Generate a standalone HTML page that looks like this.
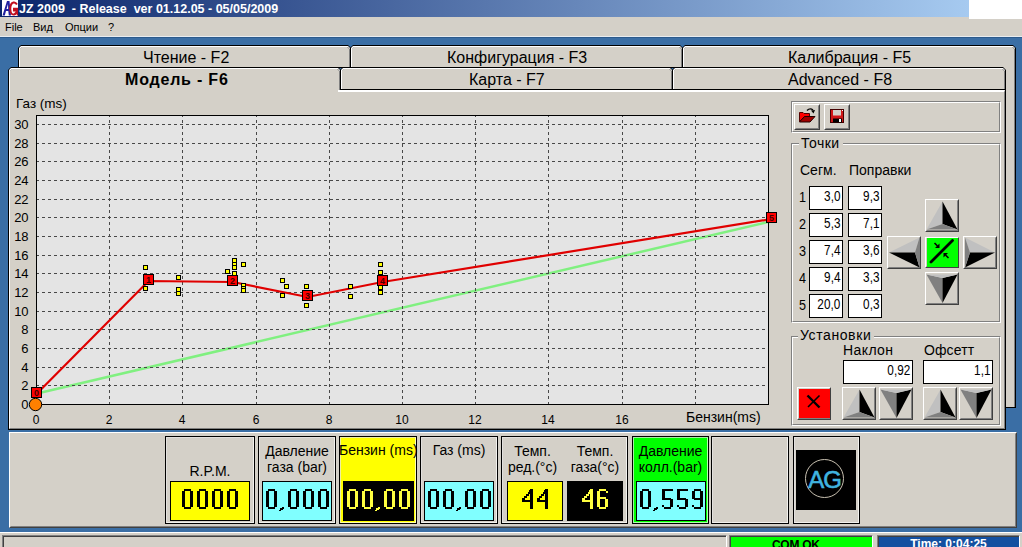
<!DOCTYPE html>
<html><head><meta charset="utf-8">
<style>
*{margin:0;padding:0;box-sizing:border-box}
html,body{width:1022px;height:547px;overflow:hidden;background:#3A6EA5;font-family:"Liberation Sans",sans-serif;color:#000;position:relative}
.a{position:absolute}
.t{position:absolute;white-space:pre;line-height:1}
.gray{background:#D4D0C8}
.btn{position:absolute;background:#D4D0C8;border:1px solid;border-color:#fff #404040 #404040 #fff}
.btn:before{content:"";position:absolute;left:0;top:0;right:0;bottom:0;border:1px solid;border-color:#D4D0C8 #808080 #808080 #D4D0C8}
.etch{position:absolute;border:1px solid;border-color:#808080 #fff #fff #808080}
.etch:before{content:"";position:absolute;left:0;top:0;right:0;bottom:0;border:1px solid;border-color:#fff #808080 #808080 #fff}
.edit{position:absolute;background:#fff;border:1px solid #000;font-size:14px;text-align:right;padding-right:2px;line-height:19px}
.edit span{display:inline-block;transform:scaleX(.84);transform-origin:100% 50%}
.lbl{position:absolute;white-space:pre;line-height:1;font-size:13px}
.disp{position:absolute;border:1px solid #000;font-weight:bold;font-size:25px;text-align:center;line-height:35px}
</style></head><body>

<div class="a" style="left:0;top:0;width:969px;height:17px;background:linear-gradient(to right,#0A246A,#A6CAF0)"></div>
<div class="a" style="left:969px;top:0;width:53px;height:19px;background:#fff"></div>
<div class="a gray" style="left:0;top:17px;width:969px;height:20px"></div>
<div class="a gray" style="left:969px;top:19px;width:53px;height:18px"></div>
<div class="a" style="left:0;top:36px;width:1022px;height:1px;background:#E8ECF0"></div>
<div class="a" style="left:0;top:37px;width:1022px;height:1px;background:#2C5A8C"></div>
<svg class="a" style="left:2px;top:0" width="16" height="16">
<rect width="16" height="16" fill="#fff"/>
<path d="M0.5 15.5 L5 1 H7.5 L9 15.5 H6.8 L6.3 11 H4 L2.8 15.5Z M4.5 9 H6.2 L6 4 Z" fill="#2020A0" fill-rule="evenodd"/>
<path d="M15 4.5 Q13.5 2 11.5 2.5 Q8 3.5 8.3 9.5 Q8.7 15 12 14.5 Q14.5 14 15 10.5 H12 V8.8 H15.8 V15.5" fill="none" stroke="#C01020" stroke-width="2"/>
</svg>
<div class="t" style="left:19px;top:3px;font-weight:bold;font-size:12.5px;color:#fff">JZ 2009  - Release  ver 01.12.05 - 05/05/2009</div>
<div class="t" style="left:5px;top:22px;font-size:11px">File</div>
<div class="t" style="left:33px;top:22px;font-size:11px">Вид</div>
<div class="t" style="left:65px;top:22px;font-size:11px">Опции</div>
<div class="t" style="left:108px;top:22px;font-size:11px">?</div>
<div class="a gray" style="left:1000px;top:60px;width:16px;height:348px;border-right:1px solid #000;border-bottom:1px solid #000"></div>
<div class="a" style="left:1014px;top:60px;width:1px;height:347px;background:#808080"></div>
<div class="a" style="left:18px;top:45px;width:333px;height:23px;background:#000;clip-path:polygon(0 3px,3px 0,calc(100% - 3px) 0,100% 3px,100% 100%,0 100%)"><div class="a" style="left:1px;top:1px;right:1px;bottom:1px;background:#fff;clip-path:polygon(0 2px,2px 0,calc(100% - 2px) 0,100% 2px,100% 100%,0 100%)"><div class="a" style="left:1px;top:1px;right:0;bottom:0;background:#808080;clip-path:polygon(0 2px,2px 0,calc(100% - 2px) 0,100% 2px,100% 100%,0 100%)"><div class="a" style="left:0;top:0;right:1px;bottom:0;background:#D4D0C8;clip-path:polygon(0 2px,2px 0,calc(100% - 2px) 0,100% 2px,100% 100%,0 100%)"></div></div></div></div>
<div class="a" style="left:350px;top:45px;width:333px;height:23px;background:#000;clip-path:polygon(0 3px,3px 0,calc(100% - 3px) 0,100% 3px,100% 100%,0 100%)"><div class="a" style="left:1px;top:1px;right:1px;bottom:1px;background:#fff;clip-path:polygon(0 2px,2px 0,calc(100% - 2px) 0,100% 2px,100% 100%,0 100%)"><div class="a" style="left:1px;top:1px;right:0;bottom:0;background:#808080;clip-path:polygon(0 2px,2px 0,calc(100% - 2px) 0,100% 2px,100% 100%,0 100%)"><div class="a" style="left:0;top:0;right:1px;bottom:0;background:#D4D0C8;clip-path:polygon(0 2px,2px 0,calc(100% - 2px) 0,100% 2px,100% 100%,0 100%)"></div></div></div></div>
<div class="a" style="left:682px;top:45px;width:334px;height:23px;background:#000;clip-path:polygon(0 3px,3px 0,calc(100% - 3px) 0,100% 3px,100% 100%,0 100%)"><div class="a" style="left:1px;top:1px;right:1px;bottom:0px;background:#fff;clip-path:polygon(0 2px,2px 0,calc(100% - 2px) 0,100% 2px,100% 100%,0 100%)"><div class="a" style="left:1px;top:1px;right:0;bottom:0;background:#808080;clip-path:polygon(0 2px,2px 0,calc(100% - 2px) 0,100% 2px,100% 100%,0 100%)"><div class="a" style="left:0;top:0;right:1px;bottom:0;background:#D4D0C8;clip-path:polygon(0 2px,2px 0,calc(100% - 2px) 0,100% 2px,100% 100%,0 100%)"></div></div></div></div>
<div class="t" style="left:143px;top:50px;font-size:16px">Чтение - F2</div>
<div class="t" style="left:447px;top:50px;font-size:16px">Конфигурация - F3</div>
<div class="t" style="left:788px;top:50px;font-size:16px">Калибрация - F5</div>
<div class="a gray" style="left:8px;top:89px;width:998px;height:341px;border:1px solid #000"><div class="a" style="left:0;top:0;right:0;bottom:0;border-left:1px solid #fff;border-top:2px solid #fff;border-right:1px solid #808080;border-bottom:1px solid #808080"></div></div>
<div class="a" style="left:340px;top:67px;width:333px;height:23px;background:#000;clip-path:polygon(0 3px,3px 0,calc(100% - 3px) 0,100% 3px,100% 100%,0 100%)"><div class="a" style="left:1px;top:1px;right:1px;bottom:1px;background:#fff;clip-path:polygon(0 2px,2px 0,calc(100% - 2px) 0,100% 2px,100% 100%,0 100%)"><div class="a" style="left:1px;top:1px;right:0;bottom:0;background:#808080;clip-path:polygon(0 2px,2px 0,calc(100% - 2px) 0,100% 2px,100% 100%,0 100%)"><div class="a" style="left:0;top:0;right:1px;bottom:0;background:#D4D0C8;clip-path:polygon(0 2px,2px 0,calc(100% - 2px) 0,100% 2px,100% 100%,0 100%)"></div></div></div></div>
<div class="a" style="left:672px;top:67px;width:334px;height:23px;background:#000;clip-path:polygon(0 3px,3px 0,calc(100% - 3px) 0,100% 3px,100% 100%,0 100%)"><div class="a" style="left:1px;top:1px;right:1px;bottom:1px;background:#fff;clip-path:polygon(0 2px,2px 0,calc(100% - 2px) 0,100% 2px,100% 100%,0 100%)"><div class="a" style="left:1px;top:1px;right:0;bottom:0;background:#808080;clip-path:polygon(0 2px,2px 0,calc(100% - 2px) 0,100% 2px,100% 100%,0 100%)"><div class="a" style="left:0;top:0;right:1px;bottom:0;background:#D4D0C8;clip-path:polygon(0 2px,2px 0,calc(100% - 2px) 0,100% 2px,100% 100%,0 100%)"></div></div></div></div>
<div class="a" style="left:8px;top:67px;width:333px;height:23px;background:#000;clip-path:polygon(0 3px,3px 0,calc(100% - 3px) 0,100% 3px,100% 100%,0 100%)"><div class="a" style="left:1px;top:1px;right:1px;bottom:0px;background:#fff;clip-path:polygon(0 2px,2px 0,calc(100% - 2px) 0,100% 2px,100% 100%,0 100%)"><div class="a" style="left:1px;top:1px;right:0;bottom:0;background:#808080;clip-path:polygon(0 2px,2px 0,calc(100% - 2px) 0,100% 2px,100% 100%,0 100%)"><div class="a" style="left:0;top:0;right:1px;bottom:0;background:#D4D0C8;clip-path:polygon(0 2px,2px 0,calc(100% - 2px) 0,100% 2px,100% 100%,0 100%)"></div></div></div></div>
<div class="a gray" style="left:10px;top:89px;width:328px;height:3px"></div>
<div class="a" style="left:9px;top:89px;width:1px;height:3px;background:#fff"></div>
<div class="t" style="left:125px;top:72px;font-size:16px;font-weight:bold;letter-spacing:0.8px">Модель - F6</div>
<div class="t" style="left:469px;top:72px;font-size:16px">Карта - F7</div>
<div class="t" style="left:788px;top:72px;font-size:16px">Advanced - F8</div>
<svg class="a" style="left:0;top:0" width="1022" height="430">
<rect x="36.5" y="115.5" width="732" height="289" fill="#E4E4E4" stroke="#000" stroke-width="1"/>
<line x1="36.0" y1="393.7337" x2="768.0" y2="222.00649999999996" stroke="#80F080" stroke-width="2.5"/>
<path d="M109.5 116V404 M182.5 116V404 M256.5 116V404 M329.5 116V404 M402.5 116V404 M475.5 116V404 M548.5 116V404 M622.5 116V404 M695.5 116V404" stroke="#484848" stroke-width="1" stroke-dasharray="3 3" stroke-dashoffset="2" fill="none"/>
<path d="M36 385.5H768 M36 367.5H768 M36 348.5H768 M36 329.5H768 M36 311.5H768 M36 292.5H768 M36 273.5H768 M36 255.5H768 M36 236.5H768 M36 217.5H768 M36 199.5H768 M36 180.5H768 M36 161.5H768 M36 143.5H768 M36 124.5H768" stroke="#484848" stroke-width="1" stroke-dasharray="3 3" fill="none"/>
<rect x="36.5" y="115.5" width="732" height="289" fill="none" stroke="#000" stroke-width="1"/>
<polyline points="36.5,394.0 148.5,281.0 232.5,282.0 307.5,297.0 382.5,282.0 771.5,219.0" fill="none" stroke="#E00000" stroke-width="2.2"/>
<rect x="143.5" y="265.5" width="4" height="4" fill="#FFFF00" stroke="#000" stroke-width="1"/>
<rect x="143.5" y="286.5" width="4" height="4" fill="#FFFF00" stroke="#000" stroke-width="1"/>
<rect x="176.5" y="275.5" width="4" height="4" fill="#FFFF00" stroke="#000" stroke-width="1"/>
<rect x="176.5" y="287.5" width="4" height="4" fill="#FFFF00" stroke="#000" stroke-width="1"/>
<rect x="176.5" y="291.5" width="4" height="4" fill="#FFFF00" stroke="#000" stroke-width="1"/>
<rect x="232.5" y="258.5" width="4" height="4" fill="#FFFF00" stroke="#000" stroke-width="1"/>
<rect x="232.5" y="262.5" width="4" height="4" fill="#FFFF00" stroke="#000" stroke-width="1"/>
<rect x="232.5" y="265.5" width="4" height="4" fill="#FFFF00" stroke="#000" stroke-width="1"/>
<rect x="232.5" y="271.5" width="4" height="4" fill="#FFFF00" stroke="#000" stroke-width="1"/>
<rect x="225.5" y="269.5" width="4" height="4" fill="#FFFF00" stroke="#000" stroke-width="1"/>
<rect x="241.5" y="262.5" width="4" height="4" fill="#FFFF00" stroke="#000" stroke-width="1"/>
<rect x="241.5" y="283.5" width="4" height="4" fill="#FFFF00" stroke="#000" stroke-width="1"/>
<rect x="241.5" y="286.5" width="4" height="4" fill="#FFFF00" stroke="#000" stroke-width="1"/>
<rect x="241.5" y="288.5" width="4" height="4" fill="#FFFF00" stroke="#000" stroke-width="1"/>
<rect x="280.5" y="278.5" width="4" height="4" fill="#FFFF00" stroke="#000" stroke-width="1"/>
<rect x="284.5" y="284.5" width="4" height="4" fill="#FFFF00" stroke="#000" stroke-width="1"/>
<rect x="280.5" y="293.5" width="4" height="4" fill="#FFFF00" stroke="#000" stroke-width="1"/>
<rect x="304.5" y="284.5" width="4" height="4" fill="#FFFF00" stroke="#000" stroke-width="1"/>
<rect x="304.5" y="303.5" width="4" height="4" fill="#FFFF00" stroke="#000" stroke-width="1"/>
<rect x="348.5" y="284.5" width="4" height="4" fill="#FFFF00" stroke="#000" stroke-width="1"/>
<rect x="348.5" y="294.5" width="4" height="4" fill="#FFFF00" stroke="#000" stroke-width="1"/>
<rect x="378.5" y="262.5" width="4" height="4" fill="#FFFF00" stroke="#000" stroke-width="1"/>
<rect x="378.5" y="270.5" width="4" height="4" fill="#FFFF00" stroke="#000" stroke-width="1"/>
<rect x="378.5" y="285.5" width="4" height="4" fill="#FFFF00" stroke="#000" stroke-width="1"/>
<rect x="378.5" y="290.5" width="4" height="4" fill="#FFFF00" stroke="#000" stroke-width="1"/>
<circle cx="35.5" cy="404.5" r="6.2" fill="#FF8000" stroke="#000" stroke-width="1"/>
<rect x="31.5" y="387.5" width="10" height="10" fill="#FF0000" stroke="#000" stroke-width="1"/>
<text x="36.5" y="396.0" font-size="9" font-weight="bold" text-anchor="middle" fill="#400" font-family="Liberation Sans">0</text>
<rect x="143.5" y="274.5" width="10" height="10" fill="#FF0000" stroke="#000" stroke-width="1"/>
<text x="148.5" y="283.0" font-size="9" font-weight="bold" text-anchor="middle" fill="#400" font-family="Liberation Sans">1</text>
<rect x="227.5" y="275.5" width="10" height="10" fill="#FF0000" stroke="#000" stroke-width="1"/>
<text x="232.5" y="284.0" font-size="9" font-weight="bold" text-anchor="middle" fill="#400" font-family="Liberation Sans">2</text>
<rect x="302.5" y="290.5" width="10" height="10" fill="#FF0000" stroke="#000" stroke-width="1"/>
<text x="307.5" y="299.0" font-size="9" font-weight="bold" text-anchor="middle" fill="#400" font-family="Liberation Sans">3</text>
<rect x="377.5" y="275.5" width="10" height="10" fill="#FF0000" stroke="#000" stroke-width="1"/>
<text x="382.5" y="284.0" font-size="9" font-weight="bold" text-anchor="middle" fill="#400" font-family="Liberation Sans">4</text>
<rect x="766.5" y="212.5" width="10" height="10" fill="#FF0000" stroke="#000" stroke-width="1"/>
<text x="771.5" y="221.0" font-size="9" font-weight="bold" text-anchor="middle" fill="#400" font-family="Liberation Sans">5</text>
</svg>
<div class="t" style="left:16px;top:97px;font-size:13.5px">Газ (ms)</div>
<div class="t" style="left:0;width:28px;text-align:right;top:398px;font-size:13px;letter-spacing:-0.4px">0</div>
<div class="t" style="left:0;width:28px;text-align:right;top:379px;font-size:13px;letter-spacing:-0.4px">2</div>
<div class="t" style="left:0;width:28px;text-align:right;top:361px;font-size:13px;letter-spacing:-0.4px">4</div>
<div class="t" style="left:0;width:28px;text-align:right;top:342px;font-size:13px;letter-spacing:-0.4px">6</div>
<div class="t" style="left:0;width:28px;text-align:right;top:323px;font-size:13px;letter-spacing:-0.4px">8</div>
<div class="t" style="left:0;width:28px;text-align:right;top:305px;font-size:13px;letter-spacing:-0.4px">10</div>
<div class="t" style="left:0;width:28px;text-align:right;top:286px;font-size:13px;letter-spacing:-0.4px">12</div>
<div class="t" style="left:0;width:28px;text-align:right;top:267px;font-size:13px;letter-spacing:-0.4px">14</div>
<div class="t" style="left:0;width:28px;text-align:right;top:249px;font-size:13px;letter-spacing:-0.4px">16</div>
<div class="t" style="left:0;width:28px;text-align:right;top:230px;font-size:13px;letter-spacing:-0.4px">18</div>
<div class="t" style="left:0;width:28px;text-align:right;top:211px;font-size:13px;letter-spacing:-0.4px">20</div>
<div class="t" style="left:0;width:28px;text-align:right;top:193px;font-size:13px;letter-spacing:-0.4px">22</div>
<div class="t" style="left:0;width:28px;text-align:right;top:174px;font-size:13px;letter-spacing:-0.4px">24</div>
<div class="t" style="left:0;width:28px;text-align:right;top:155px;font-size:13px;letter-spacing:-0.4px">26</div>
<div class="t" style="left:0;width:28px;text-align:right;top:137px;font-size:13px;letter-spacing:-0.4px">28</div>
<div class="t" style="left:0;width:28px;text-align:right;top:118px;font-size:13px;letter-spacing:-0.4px">30</div>
<div class="t" style="left:16px;width:40px;text-align:center;top:414px;font-size:12px">0</div>
<div class="t" style="left:89px;width:40px;text-align:center;top:414px;font-size:12px">2</div>
<div class="t" style="left:162px;width:40px;text-align:center;top:414px;font-size:12px">4</div>
<div class="t" style="left:236px;width:40px;text-align:center;top:414px;font-size:12px">6</div>
<div class="t" style="left:309px;width:40px;text-align:center;top:414px;font-size:12px">8</div>
<div class="t" style="left:382px;width:40px;text-align:center;top:414px;font-size:12px">10</div>
<div class="t" style="left:455px;width:40px;text-align:center;top:414px;font-size:12px">12</div>
<div class="t" style="left:528px;width:40px;text-align:center;top:414px;font-size:12px">14</div>
<div class="t" style="left:602px;width:40px;text-align:center;top:414px;font-size:12px">16</div>
<div class="t" style="left:686px;top:410px;font-size:14px">Бензин(ms)</div>
<div class="etch" style="left:791px;top:101px;width:210px;height:32px"></div>
<div class="btn" style="left:794px;top:104px;width:26px;height:26px"></div>
<div class="btn" style="left:824px;top:104px;width:26px;height:26px"></div>
<svg class="a" style="left:794px;top:104px" width="26" height="26">
<path d="M5.5 17.5 V8.5 H9 L10 9.5 H15.5 V12.5 H10.5 L5.5 17.5Z" fill="#FF0000" stroke="#500" stroke-width="1"/>
<path d="M5.5 18 L10.5 12.5 H21 L16 18 Z" fill="#A00000" stroke="#200" stroke-width="1"/>
<path d="M13 6.5 Q16 3.5 19 6" fill="none" stroke="#000" stroke-width="1.4"/>
<path d="M17 6.5 L21 6 L19.5 9.5 Z" fill="#000"/>
</svg>
<svg class="a" style="left:824px;top:104px" width="26" height="26">
<rect x="6.5" y="5.5" width="13" height="13" fill="#D01818" stroke="#400" stroke-width="1"/>
<rect x="9" y="6" width="8" height="5.5" fill="#D4D0C8"/>
<rect x="9" y="14.5" width="9" height="4" fill="#000"/>
<rect x="15" y="15" width="2" height="3" fill="#fff"/>
<rect x="18" y="6" width="1" height="1" fill="#fff"/>
</svg>
<div class="etch" style="left:791px;top:143px;width:210px;height:180px"></div>
<div class="t gray" style="left:799px;top:136px;font-size:14px;padding:0 3px 0 2px;letter-spacing:0.5px">Точки</div>
<div class="t" style="left:800px;top:163px;font-size:14px">Сегм.</div>
<div class="t" style="left:849px;top:163px;font-size:14px">Поправки</div>
<div class="lbl" style="left:799px;top:190px;font-size:14px;transform:scaleX(.9);transform-origin:0 0">1</div>
<div class="edit" style="left:809px;top:186px;width:34px;height:24px"><span>3,0</span></div>
<div class="edit" style="left:848px;top:186px;width:34px;height:24px"><span>9,3</span></div>
<div class="lbl" style="left:799px;top:217px;font-size:14px;transform:scaleX(.9);transform-origin:0 0">2</div>
<div class="edit" style="left:809px;top:213px;width:34px;height:24px"><span>5,3</span></div>
<div class="edit" style="left:848px;top:213px;width:34px;height:24px"><span>7,1</span></div>
<div class="lbl" style="left:799px;top:244px;font-size:14px;transform:scaleX(.9);transform-origin:0 0">3</div>
<div class="edit" style="left:809px;top:240px;width:34px;height:24px"><span>7,4</span></div>
<div class="edit" style="left:848px;top:240px;width:34px;height:24px"><span>3,6</span></div>
<div class="lbl" style="left:799px;top:271px;font-size:14px;transform:scaleX(.9);transform-origin:0 0">4</div>
<div class="edit" style="left:809px;top:267px;width:34px;height:24px"><span>9,4</span></div>
<div class="edit" style="left:848px;top:267px;width:34px;height:24px"><span>3,3</span></div>
<div class="lbl" style="left:799px;top:298px;font-size:14px;transform:scaleX(.9);transform-origin:0 0">5</div>
<div class="edit" style="left:809px;top:294px;width:34px;height:24px"><span>20,0</span></div>
<div class="edit" style="left:848px;top:294px;width:34px;height:24px"><span>0,3</span></div>
<div class="btn" style="left:925px;top:199px;width:34px;height:33px"></div><svg class="a" style="left:925px;top:199px" width="34" height="33"><path d="M17.5 2.5L1.5 30.5L17.5 25Z" fill="#C0C0C0"/><path d="M17.5 2.5L17.5 25L32.5 30.5Z" fill="#000"/><path d="M1.5 30.5L17.5 25L32.5 30.5Z" fill="#808080"/></svg>
<div class="btn" style="left:887px;top:236px;width:34px;height:33px"></div><svg class="a" style="left:887px;top:236px" width="34" height="33"><path d="M2 16.5L32.5 1.5L28 16.5Z" fill="#C0C0C0"/><path d="M2 16.5L28 16.5L32.5 31.5Z" fill="#000"/><path d="M32.5 1.5L28 16.5L32.5 31.5Z" fill="#808080"/></svg>
<div class="btn" style="left:963px;top:236px;width:34px;height:33px"></div><svg class="a" style="left:963px;top:236px" width="34" height="33"><path d="M32 16.5L2 1.5L7 16.5Z" fill="#C0C0C0"/><path d="M32 16.5L7 16.5L2 31.5Z" fill="#000"/><path d="M2 1.5L7 16.5L2 31.5Z" fill="#808080"/></svg>
<div class="btn" style="left:925px;top:272px;width:34px;height:33px"></div><svg class="a" style="left:925px;top:272px" width="34" height="33"><path d="M17.5 31L1.5 2.5L17.5 6Z" fill="#808080"/><path d="M17.5 31L17.5 6L32.5 2.5Z" fill="#000"/><path d="M1.5 2.5L17.5 6L32.5 2.5Z" fill="#C0C0C0"/></svg>
<div class="btn" style="left:925px;top:237px;width:34px;height:31px"></div>
<div class="a" style="left:927px;top:238px;width:31px;height:29px;background:#00FF00"></div>
<svg class="a" style="left:925px;top:237px" width="34" height="31">
<line x1="6" y1="25" x2="27.5" y2="3.5" stroke="#000" stroke-width="2.8" stroke-linecap="round"/>
<path d="M9.5 6 L12.5 9" stroke="#000" stroke-width="1.6" fill="none"/>
<path d="M14.5 11 V6.5 L10 11 Z" fill="#000"/>
<path d="M23.5 21 L20.5 18" stroke="#000" stroke-width="1.6" fill="none"/>
<path d="M18.5 16 V20.5 L23 16 Z" fill="#000"/>
</svg>
<div class="etch" style="left:791px;top:336px;width:210px;height:90px"></div>
<div class="t gray" style="left:798px;top:328px;font-size:14px;padding:0 3px 0 2px;letter-spacing:0.6px">Установки</div>
<div class="t" style="left:843px;top:343px;font-size:14px;letter-spacing:0.4px">Наклон</div>
<div class="t" style="left:924px;top:343px;font-size:14px;letter-spacing:0.1px">Офсетт</div>
<div class="edit" style="left:843px;top:360px;width:70px;height:24px"><span>0,92</span></div>
<div class="edit" style="left:923px;top:360px;width:70px;height:24px"><span>1,1</span></div>
<div class="btn" style="left:797px;top:387px;width:34px;height:33px"></div>
<div class="a" style="left:799px;top:389px;width:31px;height:29px;background:#FF0000"></div>
<svg class="a" style="left:797px;top:387px" width="34" height="33"><path d="M10.5 8.5 L22.5 20.5" stroke="#000" stroke-width="2.4"/><path d="M22.5 8.5 L11 20" stroke="#000" stroke-width="1.6"/></svg>
<div class="btn" style="left:842px;top:387px;width:34px;height:33px"></div><svg class="a" style="left:842px;top:387px" width="34" height="33"><path d="M17.5 2.5L1.5 30.5L17.5 25Z" fill="#C0C0C0"/><path d="M17.5 2.5L17.5 25L32.5 30.5Z" fill="#000"/><path d="M1.5 30.5L17.5 25L32.5 30.5Z" fill="#808080"/></svg>
<div class="btn" style="left:879px;top:387px;width:34px;height:33px"></div><svg class="a" style="left:879px;top:387px" width="34" height="33"><path d="M17.5 31L1.5 2.5L17.5 6Z" fill="#808080"/><path d="M17.5 31L17.5 6L32.5 2.5Z" fill="#000"/><path d="M1.5 2.5L17.5 6L32.5 2.5Z" fill="#C0C0C0"/></svg>
<div class="btn" style="left:923px;top:387px;width:34px;height:33px"></div><svg class="a" style="left:923px;top:387px" width="34" height="33"><path d="M17.5 2.5L1.5 30.5L17.5 25Z" fill="#C0C0C0"/><path d="M17.5 2.5L17.5 25L32.5 30.5Z" fill="#000"/><path d="M1.5 30.5L17.5 25L32.5 30.5Z" fill="#808080"/></svg>
<div class="btn" style="left:959px;top:387px;width:34px;height:33px"></div><svg class="a" style="left:959px;top:387px" width="34" height="33"><path d="M17.5 31L1.5 2.5L17.5 6Z" fill="#808080"/><path d="M17.5 31L17.5 6L32.5 2.5Z" fill="#000"/><path d="M1.5 2.5L17.5 6L32.5 2.5Z" fill="#C0C0C0"/></svg>
<div class="a gray" style="left:9px;top:432px;width:1008px;height:96px;border:1px solid;border-color:#fff #404040 #404040 #fff"><div class="a" style="left:0;top:0;right:0;bottom:0;border:1px solid;border-color:#D4D0C8 #808080 #808080 #D4D0C8"></div></div>
<div class="a" style="left:165px;top:436px;width:90px;height:88px;background:#D4D0C8;border:1px solid #000"><div class="a" style="left:0;top:0;right:0;bottom:0;border:1px solid;border-color:#E8E8E8 #fff #fff #E8E8E8;opacity:.7"></div></div>
<div class="lbl" style="left:165px;width:90px;text-align:center;top:464px;font-size:14px">R.P.M.</div>
<div class="a" style="left:170px;top:481px;width:80px;height:40px;background:#FFFF00;border:1px solid #000"></div><svg class="a" style="left:182px;top:489px" width="58" height="23" shape-rendering="crispEdges"><g fill="#000"><rect x="2" y="0" width="7" height="2"/><rect x="2" y="18" width="7" height="2"/><rect x="0" y="2" width="3" height="16"/><rect x="8" y="2" width="3" height="16"/><rect x="17" y="0" width="7" height="2"/><rect x="17" y="18" width="7" height="2"/><rect x="15" y="2" width="3" height="16"/><rect x="23" y="2" width="3" height="16"/><rect x="32" y="0" width="7" height="2"/><rect x="32" y="18" width="7" height="2"/><rect x="30" y="2" width="3" height="16"/><rect x="38" y="2" width="3" height="16"/><rect x="47" y="0" width="7" height="2"/><rect x="47" y="18" width="7" height="2"/><rect x="45" y="2" width="3" height="16"/><rect x="53" y="2" width="3" height="16"/></g></svg>
<div class="a" style="left:258px;top:436px;width:78px;height:88px;background:#D4D0C8;border:1px solid #000"><div class="a" style="left:0;top:0;right:0;bottom:0;border:1px solid;border-color:#E8E8E8 #fff #fff #E8E8E8;opacity:.7"></div></div>
<div class="lbl" style="left:258px;width:78px;text-align:center;top:443px;line-height:16px;font-size:14px">Давление
газа (bar)</div>
<div class="a" style="left:262px;top:481px;width:70px;height:40px;background:#80FFFF;border:1px solid #000"></div><svg class="a" style="left:266px;top:489px" width="65" height="23" shape-rendering="crispEdges"><g fill="#000"><rect x="2" y="0" width="7" height="2"/><rect x="2" y="18" width="7" height="2"/><rect x="0" y="2" width="3" height="16"/><rect x="8" y="2" width="3" height="16"/><rect x="16" y="18" width="2" height="2"/><rect x="14" y="19" width="3" height="2"/><rect x="13" y="21" width="2" height="1"/><rect x="24" y="0" width="7" height="2"/><rect x="24" y="18" width="7" height="2"/><rect x="22" y="2" width="3" height="16"/><rect x="30" y="2" width="3" height="16"/><rect x="39" y="0" width="7" height="2"/><rect x="39" y="18" width="7" height="2"/><rect x="37" y="2" width="3" height="16"/><rect x="45" y="2" width="3" height="16"/><rect x="54" y="0" width="7" height="2"/><rect x="54" y="18" width="7" height="2"/><rect x="52" y="2" width="3" height="16"/><rect x="60" y="2" width="3" height="16"/></g></svg>
<div class="a" style="left:339px;top:436px;width:78px;height:88px;background:#FFFF00;border:1px solid #000"><div class="a" style="left:0;top:0;right:0;bottom:0;border:1px solid;border-color:#E8E8E8 #fff #fff #E8E8E8;opacity:.7"></div></div>
<div class="lbl" style="left:339px;width:78px;text-align:center;top:443px;font-size:14px">Бензин (ms)</div>
<div class="a" style="left:343px;top:481px;width:71px;height:40px;background:#000;border:1px solid #000"></div><svg class="a" style="left:347px;top:489px" width="65" height="23" shape-rendering="crispEdges"><g fill="#FFFF40"><rect x="2" y="0" width="7" height="2"/><rect x="2" y="18" width="7" height="2"/><rect x="0" y="2" width="3" height="16"/><rect x="8" y="2" width="3" height="16"/><rect x="17" y="0" width="7" height="2"/><rect x="17" y="18" width="7" height="2"/><rect x="15" y="2" width="3" height="16"/><rect x="23" y="2" width="3" height="16"/><rect x="31" y="18" width="2" height="2"/><rect x="29" y="19" width="3" height="2"/><rect x="28" y="21" width="2" height="1"/><rect x="39" y="0" width="7" height="2"/><rect x="39" y="18" width="7" height="2"/><rect x="37" y="2" width="3" height="16"/><rect x="45" y="2" width="3" height="16"/><rect x="54" y="0" width="7" height="2"/><rect x="54" y="18" width="7" height="2"/><rect x="52" y="2" width="3" height="16"/><rect x="60" y="2" width="3" height="16"/></g></svg>
<div class="a" style="left:420px;top:436px;width:78px;height:88px;background:#D4D0C8;border:1px solid #000"><div class="a" style="left:0;top:0;right:0;bottom:0;border:1px solid;border-color:#E8E8E8 #fff #fff #E8E8E8;opacity:.7"></div></div>
<div class="lbl" style="left:420px;width:78px;text-align:center;top:443px;font-size:14px">Газ (ms)</div>
<div class="a" style="left:424px;top:481px;width:70px;height:40px;background:#80FFFF;border:1px solid #000"></div><svg class="a" style="left:428px;top:489px" width="65" height="23" shape-rendering="crispEdges"><g fill="#000"><rect x="2" y="0" width="7" height="2"/><rect x="2" y="18" width="7" height="2"/><rect x="0" y="2" width="3" height="16"/><rect x="8" y="2" width="3" height="16"/><rect x="17" y="0" width="7" height="2"/><rect x="17" y="18" width="7" height="2"/><rect x="15" y="2" width="3" height="16"/><rect x="23" y="2" width="3" height="16"/><rect x="31" y="18" width="2" height="2"/><rect x="29" y="19" width="3" height="2"/><rect x="28" y="21" width="2" height="1"/><rect x="39" y="0" width="7" height="2"/><rect x="39" y="18" width="7" height="2"/><rect x="37" y="2" width="3" height="16"/><rect x="45" y="2" width="3" height="16"/><rect x="54" y="0" width="7" height="2"/><rect x="54" y="18" width="7" height="2"/><rect x="52" y="2" width="3" height="16"/><rect x="60" y="2" width="3" height="16"/></g></svg>
<div class="a" style="left:501px;top:436px;width:127px;height:88px;background:#D4D0C8;border:1px solid #000"><div class="a" style="left:0;top:0;right:0;bottom:0;border:1px solid;border-color:#E8E8E8 #fff #fff #E8E8E8;opacity:.7"></div></div>
<div class="lbl" style="left:505px;width:55px;text-align:center;top:443px;line-height:16px;font-size:14px">Темп.
ред.(°c)</div>
<div class="lbl" style="left:567px;width:56px;text-align:center;top:443px;line-height:16px;font-size:14px">Темп.
газа(°c)</div>
<div class="a" style="left:507px;top:481px;width:56px;height:40px;background:#FFFF00;border:1px solid #000"></div><svg class="a" style="left:522px;top:489px" width="28" height="23" shape-rendering="crispEdges"><g fill="#000"><rect x="8" y="0" width="3" height="20"/><rect x="0" y="11" width="11" height="2"/><rect x="0" y="9" width="3" height="2"/><rect x="2" y="7" width="3" height="2"/><rect x="4" y="5" width="3" height="2"/><rect x="6" y="3" width="3" height="2"/><rect x="7" y="1" width="2" height="2"/><rect x="23" y="0" width="3" height="20"/><rect x="15" y="11" width="11" height="2"/><rect x="15" y="9" width="3" height="2"/><rect x="17" y="7" width="3" height="2"/><rect x="19" y="5" width="3" height="2"/><rect x="21" y="3" width="3" height="2"/><rect x="22" y="1" width="2" height="2"/></g></svg>
<div class="a" style="left:567px;top:481px;width:56px;height:40px;background:#000;border:1px solid #000"></div><svg class="a" style="left:582px;top:489px" width="28" height="23" shape-rendering="crispEdges"><g fill="#FFFF40"><rect x="8" y="0" width="3" height="20"/><rect x="0" y="11" width="11" height="2"/><rect x="0" y="9" width="3" height="2"/><rect x="2" y="7" width="3" height="2"/><rect x="4" y="5" width="3" height="2"/><rect x="6" y="3" width="3" height="2"/><rect x="7" y="1" width="2" height="2"/><rect x="17" y="0" width="7" height="2"/><rect x="24" y="2" width="2" height="2"/><rect x="15" y="2" width="3" height="16"/><rect x="18" y="8" width="6" height="2"/><rect x="23" y="10" width="3" height="8"/><rect x="17" y="18" width="7" height="2"/></g></svg>
<div class="a" style="left:632px;top:436px;width:77px;height:88px;background:#00FF00;border:1px solid #000"><div class="a" style="left:0;top:0;right:0;bottom:0;border:1px solid;border-color:#E8E8E8 #fff #fff #E8E8E8;opacity:.7"></div></div>
<div class="lbl" style="left:632px;width:77px;text-align:center;top:443px;line-height:16px;font-size:14px">Давление
колл.(bar)</div>
<div class="a" style="left:636px;top:481px;width:70px;height:40px;background:#80FFFF;border:1px solid #000"></div><svg class="a" style="left:640px;top:489px" width="65" height="23" shape-rendering="crispEdges"><g fill="#000"><rect x="2" y="0" width="7" height="2"/><rect x="2" y="18" width="7" height="2"/><rect x="0" y="2" width="3" height="16"/><rect x="8" y="2" width="3" height="16"/><rect x="16" y="18" width="2" height="2"/><rect x="14" y="19" width="3" height="2"/><rect x="13" y="21" width="2" height="1"/><rect x="22" y="0" width="11" height="2"/><rect x="22" y="2" width="3" height="9"/><rect x="25" y="9" width="6" height="2"/><rect x="30" y="10" width="3" height="8"/><rect x="24" y="18" width="7" height="2"/><rect x="22" y="16" width="2" height="2"/><rect x="37" y="0" width="11" height="2"/><rect x="37" y="2" width="3" height="9"/><rect x="40" y="9" width="6" height="2"/><rect x="45" y="10" width="3" height="8"/><rect x="39" y="18" width="7" height="2"/><rect x="37" y="16" width="2" height="2"/><rect x="54" y="0" width="7" height="2"/><rect x="52" y="2" width="3" height="8"/><rect x="60" y="2" width="3" height="16"/><rect x="54" y="9" width="6" height="2"/><rect x="54" y="18" width="7" height="2"/><rect x="52" y="16" width="2" height="2"/></g></svg>
<div class="a" style="left:711px;top:436px;width:78px;height:88px;background:#D4D0C8;border:1px solid #000"><div class="a" style="left:0;top:0;right:0;bottom:0;border:1px solid;border-color:#E8E8E8 #fff #fff #E8E8E8;opacity:.7"></div></div>
<div class="a" style="left:793px;top:436px;width:67px;height:88px;background:#D4D0C8;border:1px solid #000"><div class="a" style="left:0;top:0;right:0;bottom:0;border:1px solid;border-color:#E8E8E8 #fff #fff #E8E8E8;opacity:.7"></div></div>
<svg class="a" style="left:796px;top:450px" width="60" height="60">
<rect x="0" y="0" width="60" height="60" fill="#000"/>
<circle cx="28.5" cy="28.5" r="19" fill="none" stroke="#C8C0B0" stroke-width="1"/>
<text x="28.5" y="37.5" text-anchor="middle" font-family="Liberation Sans" font-size="24" letter-spacing="-1" fill="#40B4E0" stroke="#40B4E0" stroke-width="0.6">AG</text>
</svg>
<div class="a gray" style="left:0;top:532px;width:1022px;height:15px;border-top:1px solid #fff"></div>
<div class="a" style="left:2px;top:535px;width:725px;height:16px;border:1px solid;border-color:#808080 #fff #fff #808080;box-shadow:inset 1px 1px 0 #404040"></div>
<div class="a" style="left:729px;top:535px;width:144px;height:16px;background:#00FF00;border:1px solid;border-color:#808080 #fff #fff #808080;box-shadow:inset 1px 1px 0 #404040"></div>
<div class="t" style="left:772px;top:539px;font-size:12px;font-weight:bold;letter-spacing:-0.3px">COM OK</div>
<div class="a" style="left:877px;top:535px;width:143px;height:16px;background:#1450A0;border:1px solid;border-color:#808080 #fff #fff #808080;box-shadow:inset 1px 1px 0 #404040"></div>
<div class="t" style="left:877px;width:143px;text-align:center;top:538px;font-size:12px;font-weight:bold;color:#fff">Time: 0:04:25</div>
</body></html>
